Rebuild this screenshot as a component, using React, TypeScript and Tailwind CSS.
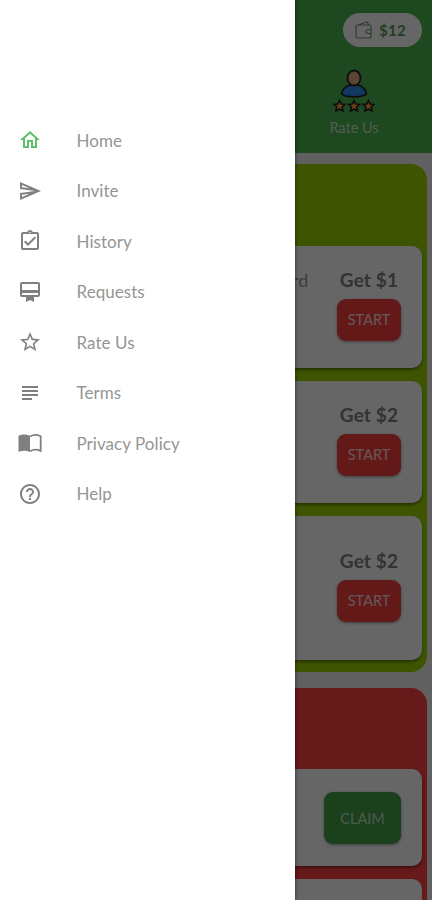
import type { ReactNode } from 'react';
import {
  MdHelpOutline,
  MdOutlineAssignmentTurnedIn,
  MdOutlineCardMembership,
  MdOutlineHome,
  MdOutlineSend,
  MdStarOutline,
  MdSubject,
} from 'react-icons/md';

function BookIcon() {
  return (
    <svg width="24" height="24" viewBox="0 0 24 24" fill="none" stroke="currentColor" strokeWidth="1.800">
      <path d="M0.500 5C3.500 3 8.500 3 12 5v16c-3.500-1.800-8-1.800-11.500 0z" fill="currentColor" stroke="none" />
      <path d="M12 5.500c3-1.800 7.500-1.800 10.700-.2v14.500c-3-1.300-7.700-1.300-10.700.4" />
    </svg>
  );
}

const MENU: { label: string; icon: ReactNode; active?: boolean }[] = [
  { label: 'Home', icon: <MdOutlineHome size={24} />, active: true },
  { label: 'Invite', icon: <MdOutlineSend size={24} /> },
  { label: 'History', icon: <MdOutlineAssignmentTurnedIn size={24} /> },
  { label: 'Requests', icon: <MdOutlineCardMembership size={24} /> },
  { label: 'Rate Us', icon: <MdStarOutline size={24} /> },
  { label: 'Terms', icon: <MdSubject size={24} /> },
  { label: 'Privacy Policy', icon: <BookIcon /> },
  { label: 'Help', icon: <MdHelpOutline size={24} /> },
];

const STAR = 'M0-5.500 1.700-2 5.500-1.600 2.700 1 3.500 5 0 3-3.500 5-2.700 1-5.500-1.600-1.700-2z';

function RateIcon() {
  return (
    <svg width="42" height="44" viewBox="0 0 42 44" stroke="#222" strokeWidth="1.800">
      <path d="M8.500 24.500c1-4.500 4-7 8.500-8.500h8c4.500 1.500 7.500 4 8.500 8.500-3 4.500-22 4.500-25 0z" fill="#2b90ed" />
      <ellipse cx="21" cy="9" rx="6.500" ry="7.500" fill="#e3aa83" />
      {[6.5, 21, 35.5].map(x => (
        <path key={x} d={STAR} transform={`translate(${x} 37)`} fill="#ff9c42" strokeWidth="1.600" />
      ))}
    </svg>
  );
}

function WalletIcon() {
  return (
    <svg width="18" height="18" viewBox="0 0 18 18" fill="none" stroke="#7d9380" strokeWidth="1.200">
      <rect x="1" y="4" width="15" height="13" rx="2" />
      <path d="M3 4l9-3 2 3M16 8.500h-3a2 2 0 000 4h3" />
    </svg>
  );
}

function Offer({ amount, className }: { amount: string; className: string }) {
  return (
    <div className={`flex flex-col items-end rounded-[10px] bg-white pr-[21px] shadow-[0_2px_3px_rgba(0,0,0,0.4)] ${className}`}>
      <div className="w-16 text-center text-[19px] leading-6 font-bold tracking-[0.150px] text-[#808080] whitespace-nowrap">Get {amount}</div>
      <button className="mt-[7px] h-[42px] w-16 rounded-[9px] bg-[#fa4040] text-[14.500px] text-white/80 shadow-[0_1px_3px_rgba(0,0,0,0.4)]">
        START
      </button>
    </div>
  );
}

export default function App() {
  return (
    <div className="relative h-[900px] w-[432px] overflow-hidden bg-[#f0f0f0] font-['Lato',sans-serif]">
      <header className="flex h-[153px] flex-col items-end bg-[#4cb450]">
        <div className="mt-[13px] mr-[10px] flex h-[34px] w-[79px] items-center rounded-full bg-white pl-[12px]">
          <WalletIcon />
          <span className="ml-[6px] text-[15px] font-bold tracking-[0.3px] text-[#5b9a63]">$12</span>
        </div>
        <div className="mt-[22px] mr-[52px] flex w-[52px] flex-col items-center">
          <RateIcon />
          <span className="mt-[5px] text-[14.500px] leading-5 whitespace-nowrap text-white/70">Rate Us</span>
        </div>
      </header>

      <section className="mt-[11px] mr-[5px] h-[508px] rounded-[16px] bg-[#9bd300] pt-[82px] pr-[5px]">
        <Offer amount="$1" className="h-[122px] pt-[22px]" />
        <span className="absolute top-[268px] left-[292px] text-[18px] leading-6 text-[#999]">rd</span>
        <Offer amount="$2" className="mt-[13px] h-[122px] pt-[22px]" />
        <Offer amount="$2" className="mt-[13px] h-[144px] pt-[33px]" />
      </section>

      <section className="mt-4 mr-[5px] h-[240px] rounded-t-[16px] bg-[#ff4242] pt-[81px] pr-[5px]">
        <div className="flex h-[97px] justify-end rounded-[10px] bg-white pt-[23px] pr-[21px] shadow-[0_2px_3px_rgba(0,0,0,0.4)]">
          <button className="h-[52px] w-[77px] rounded-[9px] bg-[#43a047] pt-0.5 text-[14.500px] text-white/70 shadow-[0_1px_3px_rgba(0,0,0,0.4)]">
            CLAIM
          </button>
        </div>
        <div className="mt-[13px] h-[60px] rounded-[10px] bg-white" />
      </section>

      {/* Scrim and drawer */}
      <div className="absolute inset-0 bg-black/60" />
      <aside className="absolute inset-y-0 left-0 w-[295px] bg-white pt-[115px] shadow-[0_0_4px_rgba(0,0,0,0.6)]">
        <nav className="flex flex-col">
          {MENU.map(item => (
            <a key={item.label} className="flex h-[50.500px] items-center pl-[18px]">
              <span className={item.active ? 'text-[#5cc16a]' : 'text-[#808080]'}>{item.icon}</span>
              <span className="ml-[34.500px] text-[17px] tracking-[0.050px] text-[#959595]">{item.label}</span>
            </a>
          ))}
        </nav>
      </aside>
    </div>
  );
}
